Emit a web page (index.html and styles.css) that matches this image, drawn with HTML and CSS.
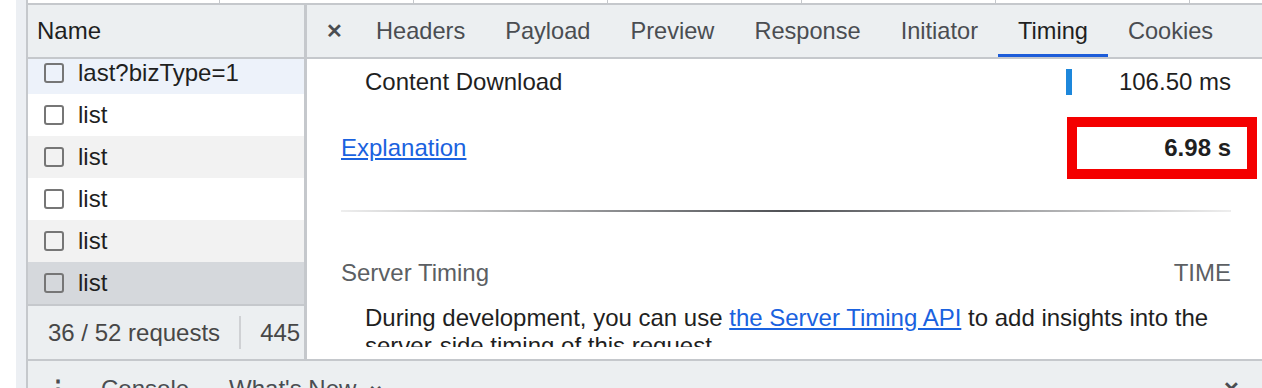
FILE: index.html
```html
<!doctype html>
<html lang="en">
  <head>
    <meta charset="UTF-8" />
    <title>Network - Timing</title>
    <link rel="stylesheet" href="styles.css">
  </head>

  <body>
    <div class="gutter"></div>

    <div class="workspace">
      <div class="top-strip">
        <span class="strip-cell first"></span>
        <span class="strip-cell"></span>
        <span class="strip-cell"></span>
        <span class="strip-cell"></span>
        <span class="strip-cell"></span>
        <span class="strip-cell"></span>
      </div>

      <div class="main">
        <!-- request list -->
        <div class="requests">
          <div class="req-header">Name</div>
          <div class="req-list">
            <div class="req-row highlighted"><span class="checkbox"></span>last?bizType=1</div>
            <div class="req-row"><span class="checkbox"></span>list</div>
            <div class="req-row striped"><span class="checkbox"></span>list</div>
            <div class="req-row"><span class="checkbox"></span>list</div>
            <div class="req-row striped"><span class="checkbox"></span>list</div>
            <div class="req-row selected"><span class="checkbox"></span>list</div>
          </div>
          <div class="req-footer">
            <span>36 / 52 requests</span>
            <span class="sep"></span>
            <span>445</span>
          </div>
        </div>

        <!-- request details -->
        <div class="details">
          <div class="tabs">
            <span class="close-tab">&#x2715;</span>
            <span class="tab">Headers</span>
            <span class="tab">Payload</span>
            <span class="tab">Preview</span>
            <span class="tab">Response</span>
            <span class="tab">Initiator</span>
            <span class="tab active">Timing</span>
            <span class="tab">Cookies</span>
          </div>

          <div class="timing">
            <div class="timing-row">
              <span class="label indent">Content Download</span>
              <span class="bar-cell"><span class="bar"></span></span>
              <span class="value">106.50 ms</span>
            </div>

            <div class="timing-row total">
              <a class="label link" href="#">Explanation</a>
              <span class="total-value">6.98 s</span>
            </div>

            <div class="divider"></div>

            <div class="server-head">
              <span>Server Timing</span>
              <span>TIME</span>
            </div>

            <p class="server-note">
              During development, you can use <a class="link" href="#">the Server Timing API</a> to add insights into the server-side timing of this request.
            </p>
          </div>
        </div>
      </div>

      <div class="drawer">
        <span class="dots">&#x22EE;</span>
        <span class="drawer-tab">Console</span>
        <span class="drawer-tab">What's New <span class="small-x">&#x2715;</span></span>
        <span class="drawer-close">&#x2715;</span>
      </div>
    </div>
  </body>
</html>
```

FILE: styles.css
```css
* {
  margin: 0;
  padding: 0;
  box-sizing: border-box;
}

body {
  font-family: 'Liberation Sans', Arial, sans-serif;
  font-size: 24px;
  color: #1f1f1f;
  background-color: white;
  display: flex;
  height: 388px;
  overflow: hidden;
}

.gutter {
  width: 26px;
  flex-shrink: 0;
  border-left: 16px solid white;
  background-color: #eceff3;
}

.workspace {
  flex: 1;
  display: flex;
  flex-direction: column;
  border-left: 2px solid #c5c8cc;
  min-width: 0;
}

.top-strip {
  height: 3px;
  display: flex;
  flex-shrink: 0;
}

.strip-cell {
  width: 194px;
  border-right: 1px solid #c5c8cc;
}

.strip-cell.first {
  width: 192px;
}

.main {
  height: 356px;
  flex-shrink: 0;
  display: flex;
  border-top: 2px solid #c5c8cc;
}

/* request list */

.requests {
  width: 279px;
  flex-shrink: 0;
  display: flex;
  flex-direction: column;
  border-right: 3px solid #c5c8cc;
}

.req-header {
  height: 54px;
  flex-shrink: 0;
  display: flex;
  align-items: center;
  padding-left: 9px;
  background-color: #eceff1;
  border-bottom: 2px solid #c5c8cc;
}

.req-list {
  height: 245px;
  flex-shrink: 0;
  display: flex;
  flex-direction: column;
  justify-content: flex-end;
  overflow: hidden;
}

.req-row {
  height: 42px;
  flex-shrink: 0;
  display: flex;
  align-items: center;
  gap: 14px;
  padding-left: 16px;
  white-space: nowrap;
  background-color: white;
}

.req-row.highlighted {
  background-color: #edf2fa;
}

.req-row.striped {
  background-color: #f2f2f2;
}

.req-row.selected {
  background-color: #d5d8dc;
}

.checkbox {
  width: 20px;
  height: 20px;
  flex-shrink: 0;
  border: 2px solid #767676;
  border-radius: 3px;
}

.req-footer {
  flex: 1;
  display: flex;
  align-items: center;
  gap: 19px;
  padding-left: 20px;
  white-space: nowrap;
  overflow: hidden;
  color: #474747;
  background-color: #eceff1;
  border-top: 2px solid #c5c8cc;
}

.req-footer .sep {
  width: 2px;
  height: 33px;
  flex-shrink: 0;
  background-color: #cfd1d4;
}

/* details */

.details {
  flex: 1;
  min-width: 0;
  display: flex;
  flex-direction: column;
}

.tabs {
  height: 54px;
  flex-shrink: 0;
  display: flex;
  align-items: stretch;
  background-color: #eceff1;
  border-bottom: 2px solid #c5c8cc;
  white-space: nowrap;
  font-size: 23.6px;
}

.close-tab {
  width: 49px;
  display: flex;
  align-items: center;
  justify-content: center;
  padding-left: 5px;
  font-size: 20px;
  font-weight: 700;
  color: #4a4d51;
}

.tab {
  display: flex;
  align-items: center;
  padding: 0 20px;
  color: #4a4d51;
}

.tab.active {
  color: #1f1f1f;
  box-shadow: inset 0 -3px 0 #1c5cd9;
}

.timing {
  flex: 1;
  overflow: hidden;
  padding: 0 31px 0 34px;
  margin-bottom: 12px;
}

.timing-row {
  display: flex;
  align-items: center;
  height: 46px;
}

.timing-row .label {
  flex: 1;
}

.indent {
  padding-left: 24px;
}

.bar-cell {
  width: 6px;
  height: 26px;
  display: flex;
}

.bar {
  width: 6px;
  background-color: #1d87db;
}

.value {
  width: 159px;
  text-align: right;
}

.timing-row.total {
  height: 86px;
}

.link {
  color: #1a62df;
  text-decoration: underline;
}

.total-value {
  width: 190px;
  margin-right: -26px;
  margin-left: 1px;
  padding: 7px 16px 7px 0;
  border: 10px solid #f40000;
  text-align: right;
  font-weight: 700;
}

.divider {
  height: 2px;
  margin-top: 19px;
  background: linear-gradient(to right, #eeeeee, #4f5155 50%, #eeeeee);
}

.server-head {
  height: 30px;
  margin-top: 46px;
  display: flex;
  align-items: center;
  justify-content: space-between;
  color: #5c5f63;
}

.server-note {
  margin-top: 16px;
  padding-left: 24px;
  line-height: 28px;
}

/* drawer */

.drawer {
  height: 58px;
  flex-shrink: 0;
  display: flex;
  align-items: center;
  background-color: #eceff1;
  border-top: 2px solid #c5c8cc;
  color: #4a4d51;
  white-space: nowrap;
}

.dots {
  width: 60px;
  margin-right: 13px;
  text-align: center;
  font-weight: 700;
}

.drawer-tab {
  padding-right: 40px;
}

.small-x {
  font-size: 16px;
  font-weight: 700;
  margin-left: 6px;
}

.drawer-close {
  margin-left: auto;
  margin-right: 22px;
  font-size: 20px;
  font-weight: 700;
}
```
